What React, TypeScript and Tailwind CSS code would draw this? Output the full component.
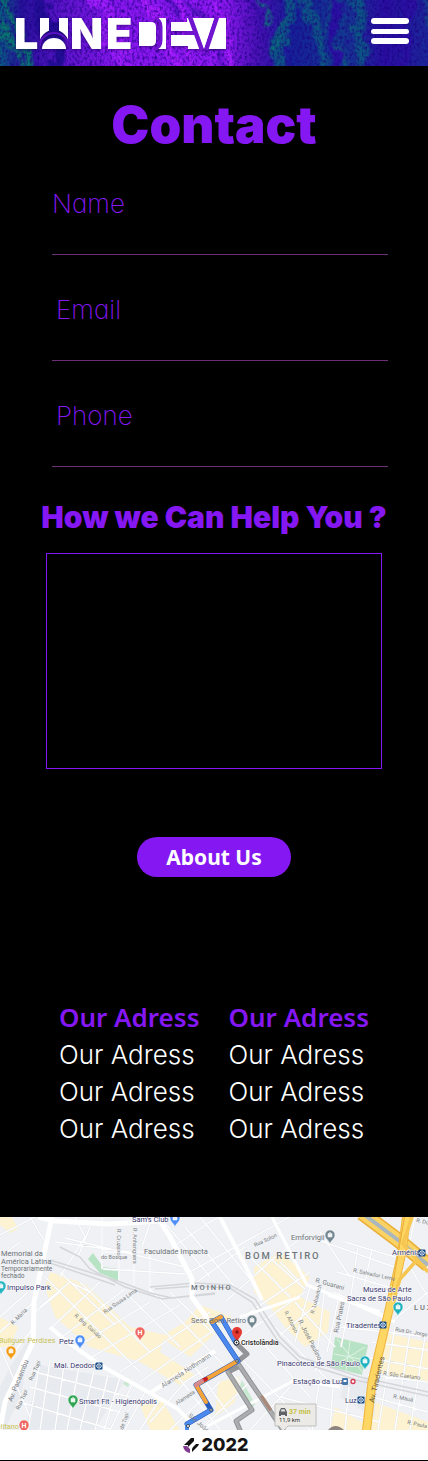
import React from "react";

const sans = "font-['Inter','Open_Sans',sans-serif]";
const thin = "font-['Inter','Lato',sans-serif] [font-feature-settings:'cv11'] text-[26px]";

function HeaderTexture() {
  return (
    <svg
      aria-hidden="true"
      className="absolute inset-0 h-full w-full"
      viewBox="0 0 428 66"
      preserveAspectRatio="none"
    >
      <defs>
        <filter id="marble" x="-10%" y="-30%" width="120%" height="160%" colorInterpolationFilters="sRGB">
          <feTurbulence type="fractalNoise" baseFrequency="0.04 0.03" numOctaves="4" seed="8" result="n" />
          <feDisplacementMap in="SourceGraphic" in2="n" scale="32" xChannelSelector="R" yChannelSelector="G" />
          <feGaussianBlur stdDeviation="1" />
        </filter>
        <filter id="grain" x="0" y="0" width="100%" height="100%" colorInterpolationFilters="sRGB">
          <feTurbulence type="fractalNoise" baseFrequency="0.4 0.3" numOctaves="3" seed="3" />
          <feColorMatrix values="0 0 0 0 0.1  0 0 0 0 0  0 0 0 0 0.5  1.8 0 0 0 -0.75" />
        </filter>
        <linearGradient id="base" x1="0" x2="1" y1="0" y2="0">
          <stop offset="0" stopColor="#075a80" />
          <stop offset="0.05" stopColor="#25119a" />
          <stop offset="0.14" stopColor="#5a14c8" />
          <stop offset="0.28" stopColor="#8716ee" />
          <stop offset="0.52" stopColor="#9018f4" />
          <stop offset="0.6" stopColor="#4a11b6" />
          <stop offset="0.68" stopColor="#161f98" />
          <stop offset="0.8" stopColor="#123a90" />
          <stop offset="0.9" stopColor="#2a0da2" />
          <stop offset="1" stopColor="#1a2898" />
        </linearGradient>
      </defs>
      <rect width="428" height="66" fill="url(#base)" />
      <g filter="url(#marble)" fill="none" strokeLinecap="round">
        <path d="M0 -20 45 100M-12 0 34 90" stroke="#08706f" strokeWidth="8" />
        <path d="M28 -20 52 30 60 100" stroke="#220e96" strokeWidth="14" />
        <path d="M92 -20 112 45 130 90" stroke="#9d1cfc" strokeWidth="14" />
        <path d="M155 -20 185 40 215 100M182 -20 220 70" stroke="#5713c2" strokeWidth="4" />
        <path d="M135 -20 190 90M170 -20 205 90M215 -20 235 90" stroke="#a71dff" strokeWidth="8" />
        <path d="M254 -20 262 20 272 50 268 90" stroke="#3b10ac" strokeWidth="5" />
        <path d="M290 -20 290 15 280 40 282 90M300 -10 315 35 330 90M350 -20 365 90" stroke="#0c5385" strokeWidth="11" />
        <path d="M330 -20 340 30 336 90M405 -20 400 90" stroke="#2b10a4" strokeWidth="9" />
        <path d="M262 -10 270 20M285 10 276 60M335 -20 328 12 322 50M340 40 350 80M424 0 440 60" stroke="#078070" strokeWidth="1.5" />
      </g>
      <rect width="428" height="66" filter="url(#grain)" />
    </svg>
  );
}

function Wordmark() {
  return (
    <svg
      width="212"
      height="34"
      viewBox="15 17 212 34"
      role="img"
      aria-label="LUNEDEV"
      className="overflow-visible drop-shadow-[0_1px_1px_rgba(20,0,60,0.5)]"
    >
      <g fill="#fff" className="font-['Inter',sans-serif] text-[43px] font-black">
        <text x="14" y="49">L</text>
        <text x="70" y="49">N</text>
        <text x="106" y="49">E</text>
      </g>
      <defs>
        <clipPath id="aboveMoon">
          <path d="M39 17H69V45A15 15 0 0 0 39 45Z" />
        </clipPath>
      </defs>
      <g fill="#fff">
        <path d="M40 18h9v31h-9zM59 18h9v31h-9z" clipPath="url(#aboveMoon)" />
        <path d="M42 49a12 11 0 0 1 24 0z" />
        <path d="M139 22h12q5 0 5 5v14q0 5-5 5h-12z" />
        <path d="M155 18h11v31h-11q6-2 6-9V27q0-7-6-9z" />
        <path d="M171 22h19l4 9h-23zM171 35h23v11h-23z" />
        <path d="M187 18h39v31h-38z" />
      </g>
      <path d="M155 18q6 2 6 9v13q0 7-6 9" fill="none" stroke="#7114cf" strokeWidth="3" />
      <path d="M40 46a14 13 0 0 1 28 0" fill="none" stroke="#5a12c0" strokeWidth="2" />
      <path d="M190 17 202 50M217 17 206 50" stroke="#7114cf" strokeWidth="4.5" />
      <path d="M186 31h10l1 4h-11z" fill="#7114cf" />
      <path d="M194 18h20l-10 30z" fill="#fff" />
    </svg>
  );
}

const pins: [number, number, string, string][] = [
  [175, 2, "#4c8df6", ""],
  [1, 70, "#20b2be", ""],
  [330, 19, "#71868f", ""],
  [398, 91, "#20b2be", ""],
  [252, 104, "#71868f", ""],
  [80, 124, "#4c8df6", ""],
  [11, 135, "#f29b13", ""],
  [73, 184, "#30a552", ""],
  [140, 116, "#ee6760", "H"],
  [24, 209, "#ee6760", "H"],
  [365, 145, "#20b2be", ""],
];

const stations: [number, number][] = [
  [422, 36],
  [383, 108],
  [99, 149],
  [361, 183],
];

const smallRoads =
  "M0 18 45 -5M0 40 20 25M48 30 30 0M55 25 130 35M60 60 85 20 75 0M78 40 90 10M102 0V52M119 12V68M134 12V68M150 35V75M103 35H150M103 52 185 57M65 21 185 50M142 30 152 0M173 30 210 5 230 -5M186 57 290 0M190 70 245 30M160 0 210 60M200 0 250 62M185 10 235 70M0 100 28 75M0 115 34 85M10 140 34 110M0 130 30 200M40 90 70 65 90 75M45 60 95 110 140 155M60 55 115 108M80 65 150 135M35 95 60 75M50 112 100 65M62 120 125 72M80 128 150 85M92 140 180 88M120 155 210 95M140 165 230 102M150 72 240 165M130 80 180 130M170 75 215 118M35 155 130 180M30 170 120 195M20 185 110 212M40 145 28 213M50 143 40 213M64 148 55 213M79 150 67 213M94 154 80 213M108 158 95 213M120 160 104 213M132 168 110 213M145 175 125 213M160 182 140 213M178 160 220 213M195 150 240 213M150 205 185 165 208 150M220 165 170 213M255 160 200 213M240 140 310 213M262 125 310 180M275 110 330 165M225 85 275 40 310 15M235 105 310 55M240 120 305 75M265 130 320 85M250 40 290 80M263 35 305 72M280 45 300 65M295 85 335 130M320 15 350 60M310 70 295 125M325 70 315 155M340 75 327 135M310 20 408 55M345 25 402 42M358 30 350 85 341 130M372 32 363 75M337 55 395 72M333 75 390 100M340 110 428 120M372 125 428 133M370 141 428 152M368 158 428 165M365 178 428 195M385 110 428 75M395 110 378 213M410 115 395 213M425 120 410 213M410 50 428 80M415 0 410 25M320 160 312 213M333 170 330 213M349 170 345 213M280 180 380 205M290 170 250 213";

function Map() {
  return (
    <svg
      role="img"
      aria-label="Map to Cristolândia, 37 min by car"
      viewBox="0 0 428 213"
      preserveAspectRatio="xMidYMid slice"
      className="block w-full bg-[#eff1f4] font-['Roboto',sans-serif]"
    >
      <rect width="428" height="213" fill="#eff1f4" />
      <g fill="#fdf3d2">
        <path d="M0 0H12L18 12 10 16 0 8ZM50 55 85 67 130 110 165 118 160 135 195 158 180 168 140 145 90 130 55 100 45 70Z" />
        <path d="M254 50 280 35 310 60 300 80 330 95 328 115 305 130 285 110 270 90 254 75ZM335 190 370 210 365 213H330ZM380 115 428 125V165L376 155ZM0 100 18 110 10 130 0 130ZM200 88 232 100 190 140 160 120 185 105Z" />
        <path d="M140 188 160 180 180 213H150ZM218 165 240 160 235 185 215 200ZM374 185 428 205V213H370Z" />
      </g>
      <g fill="#e7eaef">
        <path d="M40 148 125 163 95 213H25ZM10 150 30 120 22 175 5 213H0V170ZM345 165 378 160 374 200 340 180Z" />
      </g>
      <g fill="#b8e2c4">
        <path d="M88 42 93 36 103 50 118 52V64L100 56Z" />
        <path d="M335 120 368 128 362 158 331 150Z" />
        <path d="m125 164 5 2-2 4-5-3ZM242 163 255 187 250 195 238 175ZM366 106 382 108 380 110 366 109Z" fill="#c9e8d1" />
      </g>
      <path d="M337 122 363 156M365 130 334 149M350 124 346 154M334 137 365 143" fill="none" stroke="#dff2e4" strokeWidth="1" />
      <path d={smallRoads} fill="none" stroke="#dfe2e7" strokeWidth="2" />
      <path d={smallRoads} fill="none" stroke="#fff" strokeWidth="1.4" />
      <g fill="none" stroke="#d4d6da" strokeWidth="1.5">
        <path d="M50 43 118 64 150 76 172 81 215 77M60 30 80 40 90 52 125 70 162 82 215 76M50 46 115 68M150 70 195 66 230 68 255 82 280 120 300 140 360 160 428 175M155 72 195 69 230 71 252 85 277 123 300 145 360 164 428 179" />
      </g>
      <g fill="none" stroke="#fff" strokeWidth="5" strokeLinejoin="round">
        <path d="M52 0 34 85 33 125 5 185 0 213M38 0 55 4 110 7 160 4 170 20 192 62 192 80 215 112" />
        <path d="M50 110 65 123 100 148 150 176 178 192 190 205 188 213M150 176 215 134M220 0 250 58 262 83" strokeWidth="4" />
        <path d="M272 0 307 68 350 85 395 105M240 100 300 80M200 213 295 163 340 170M328 78 380 95" strokeWidth="3" />
      </g>
      <g fill="none" strokeLinejoin="round">
        <path d="M362 -4 398 23 428 48" stroke="#e9ae34" strokeWidth="15" />
        <path d="M362 -4 398 23 428 48" stroke="#fbd365" strokeWidth="12" />
        <path d="M362 -4 398 23 428 48" stroke="#aab7bd" strokeWidth="4" />
        <path d="M407 -4 402 35 392 80 385 110 372 165 366 218" stroke="#efb53e" strokeWidth="9" />
        <path d="M407 -4 402 35 392 80 385 110 372 165 366 218" stroke="#fdd663" strokeWidth="7" />
        <path d="M395 78 400 62 417 43M413 -3 403 27 420 46 428 55" stroke="#f6c650" strokeWidth="3.5" />
        <path d="M405 -3 391 78" stroke="#e8ac35" strokeWidth="1" />
      </g>
      <g fill="none" strokeLinejoin="round" strokeLinecap="round">
        <path d="M237 127 247 137 237 145 283 213M228 155 252 193 236 204 240 213M228 155 238 150" stroke="#929497" strokeWidth="5" />
        <path d="M237 145 283 213M228 155 252 193 236 204 240 213" stroke="#aaacae" strokeWidth="3" />
        <path d="M262 180 270 192" stroke="#a98979" strokeWidth="3.5" />
        <path d="M236 126 221 100 212 105 238 144 196 168 211 193 187 207" stroke="#285dbd" strokeWidth="5" />
        <path d="M236 126 221 100 212 105 238 144M211 193 187 207V213" stroke="#4c89ee" strokeWidth="4" />
        <path d="M221 100 212 105M236 145 196 168 206 185" stroke="#f5a33a" strokeWidth="4" />
        <path d="M204 163 206 162" stroke="#c81d22" strokeWidth="4" />
        <path d="M196 168 202 164" stroke="#d8898c" strokeWidth="4" />
      </g>
      <g fill="#fff" stroke="#345" strokeWidth="1">
        <circle cx="237" cy="144" r="1.3" />
        <circle cx="211" cy="193" r="1.3" />
        <circle cx="188" cy="209" r="1.5" />
      </g>
      <g fill="#777b80" fontSize="5.5">
        <text transform="translate(105 97) rotate(-35)">Rua Sousa Lima</text>
        <text transform="translate(74 99) rotate(42)">R. Brg. Galvão</text>
        <text transform="translate(13 108) rotate(-45)">R. Marta</text>
        <text transform="translate(117 12) rotate(90)">R. Cruzeiro</text>
        <text transform="translate(133 11) rotate(90)">R. Anhanguera</text>
        <text x="101" y="42">do Bosque</text>
        <text transform="translate(255 30) rotate(-25)">Rua Solon</text>
        <text transform="translate(315 65) rotate(16)" fontSize="6.5">R. Guarani</text>
        <text transform="translate(353 55) rotate(12)">R. Salvador Leme</text>
        <text transform="translate(314 97) rotate(-75)">R. Lubavitch</text>
        <text transform="translate(338 116) rotate(-78)" fontSize="6.5">Rua Prates</text>
        <text transform="translate(284 95) rotate(63)">R. Afonso</text>
        <text transform="translate(298 104) rotate(63)" fontSize="6.5">R. José Paulino</text>
        <text transform="translate(12 185) rotate(-68)" fontSize="7">Av. Pacaembu</text>
        <text transform="translate(32 164) rotate(-65)">Rua Tupi</text>
        <text transform="translate(19 193) rotate(-65)">Rua Tupi</text>
        <text transform="translate(163 171) rotate(-33)" fontSize="6.5">Alameda Nothmann</text>
        <text transform="translate(177 188) rotate(-33)">Alameda</text>
        <text transform="translate(188 199) rotate(42)" fontSize="6">São João</text>
        <text transform="translate(123 213) rotate(-70)">de Tupi</text>
        <text transform="translate(374 186) rotate(-77)" fontSize="7.5" fill="#665d44">Av. Tiradentes</text>
        <text transform="translate(383 158) rotate(7)">R. São Caetano</text>
        <text transform="translate(393 181) rotate(11)">R. Mauá</text>
        <text transform="translate(395 114) rotate(10)">Rua Dr. Jorge M</text>
        <text transform="translate(407 207) rotate(12)">R. Paula</text>
        <text transform="translate(416 5) rotate(12)">R. Do</text>
      </g>
      <g fill="#6d7277" fontSize="7.5">
        <text x="1" y="39">Memorial da</text>
        <text x="1" y="47">América Latina</text>
        <text x="1" y="54" fontSize="6.5">Temporariamente</text>
        <text x="1" y="61" fontSize="6.5">fechado</text>
        <text x="144" y="37">Faculdade Impacta</text>
        <text x="291" y="23">Emforvigil</text>
        <text x="191" y="106">Sesc Bom Retiro</text>
      </g>
      <g fill="#70757a" className="font-medium tracking-[2px]">
        <text x="191" y="73" fontSize="7.5">MOINHO</text>
        <text x="245" y="42" fontSize="9.5">BOM RETIRO</text>
        <text x="414" y="93" fontSize="7.5">LUZ</text>
      </g>
      <g fill="#c9c252" fontSize="7.3">
        <text x="-1" y="126">Bullguer Perdizes</text>
        <text x="-3" y="212">elitano</text>
      </g>
      <g fill="#37366f" fontSize="7.5" stroke="#fff" strokeWidth="1" paintOrder="stroke">
        <text x="132" y="5">Sam's Club</text>
        <text x="7" y="73">Impulso Park</text>
        <text x="59" y="127">Petz</text>
        <text x="54" y="151">Mal. Deodoro</text>
        <text x="79" y="187">Smart Fit - Higienópolis</text>
        <text x="392" y="38">Arménia</text>
        <text x="363" y="75">Museu de Arte</text>
        <text x="347" y="84">Sacra de São Paulo</text>
        <text x="346" y="111">Tiradentes</text>
        <text x="277" y="149">Pinacoteca de São Paulo</text>
        <text x="293" y="167">Estação da Luz</text>
        <text x="345" y="186">Luz</text>
        <text x="241" y="128" fontSize="7" fill="#222" className="font-medium">Cristolândia</text>
      </g>
      {pins.map(([x, y, color, letter]) => (
        <g key={`${x}-${y}`} transform={`translate(${x} ${y})`}>
          <path d="M0 8C-1 4-5 3-5-1A5 5 0 0 1 5-1C5 3 1 4 0 8Z" fill={color} stroke="#fff" strokeWidth="0.5" />
          {letter ? (
            <text textAnchor="middle" y="2" fontSize="7" fill="#fff" className="font-bold">{letter}</text>
          ) : (
            <path d="M-2-2.5H2V1H-2ZM-1-3.5H1" fill="#fff" stroke="#fff" strokeWidth="0.6" opacity="0.9" />
          )}
        </g>
      ))}
      {stations.map(([x, y]) => (
        <g key={`${x}-${y}`} transform={`translate(${x} ${y})`}>
          <rect x="-3.5" y="-3.5" width="7" height="7" rx="1" fill="#1b4f8c" />
          <path d="M0-3V3M-1-2-2.5 0-1 2M1-2 2.5 0 1 2" fill="none" stroke="#fff" strokeWidth="0.9" />
        </g>
      ))}
      <rect x="342" y="161" width="6" height="7" rx="1" fill="#4777a8" />
      <path d="M343.5 163h3v2h-3z" fill="#fff" />
      <circle cx="353" cy="164.5" r="2" fill="#fff" stroke="#d5354d" strokeWidth="1.3" />
      <path d="M237 126C236 121 232 119 232 115A5 5 0 0 1 242 115C242 119 238 121 237 126Z" fill="#e43a32" />
      <circle cx="237" cy="115" r="1.7" fill="#8e1310" />
      <circle cx="236.5" cy="125.5" r="2.5" fill="#fff" stroke="#222" />
      <circle cx="236.5" cy="125.5" r="0.9" fill="#222" />
      <path d="M275 187H316V209H288L283 214 279 209H275Z" fill="#eceae6" stroke="#bfbfbb" />
      <path d="M279 195 281 191H285L287 195V199H285V198H281V199H279Z" fill="#5f6368" />
      <path d="M281.5 192.2H284.5L285.3 194.5H280.7Z" fill="#dfe0de" />
      <text x="289" y="197" fontSize="7" fill="#c5bf3f" className="font-bold">37 min</text>
      <text x="279" y="205" fontSize="6" fill="#333">11,9 km</text>
      <path d="M328 213Q335 205 344 213Z" fill="#8f8580" />
    </svg>
  );
}

const fields = [
  { id: "name", label: "Name", type: "text", inset: "" },
  { id: "email", label: "Email", type: "email", inset: "pl-1" },
  { id: "phone", label: "Phone", type: "tel", inset: "pl-1" },
];

function AddressColumn() {
  return (
    <section>
      <h3 className="font-['Noto_Sans','Open_Sans',sans-serif] text-[26px] leading-[37px] font-semibold text-[#8417f2]">Our Adress</h3>
      <ul className={`${thin} leading-[37px] font-light text-white`}>
        <li>Our Adress</li>
        <li>Our Adress</li>
        <li>Our Adress</li>
      </ul>
    </section>
  );
}

export default function App() {
  return (
    <div className={`${sans} bg-black`}>
      <header className="relative h-[66px] overflow-hidden bg-[#5a14c8]">
        <HeaderTexture />
        <div className="relative flex items-start justify-between pt-[17px] pr-[19px] pl-[15px]">
          <a href="#home" aria-label="LUNEDEV">
            <Wordmark />
          </a>
          <button type="button" aria-label="Open menu" className="pt-px">
            <svg width="38" height="26" viewBox="0 0 38 26" fill="#fff">
              <rect width="38" height="6" rx="3" />
              <rect y="11" width="38" height="5" rx="2.5" />
              <rect y="20" width="38" height="6" rx="3" />
            </svg>
          </button>
        </div>
      </header>

      <main>
        <h1 className="mt-[29px] text-center text-[51px] leading-[60px] font-black text-[#8417f2]">Contact</h1>
        <form onSubmit={(e) => e.preventDefault()}>
          <div className="mt-[31px] mr-10 ml-[52px] flex flex-col gap-[37px]">
            {fields.map((f) => (
              <div key={f.id}>
                <label htmlFor={f.id} className={`${thin} ${f.inset} block leading-9 font-extralight text-[#8417f2]`}>
                  {f.label}
                </label>
                <input
                  id={f.id}
                  type={f.type}
                  className="block h-[33px] w-full border-b border-[#6a2f76] bg-transparent text-base text-white outline-none"
                />
              </div>
            ))}
          </div>
          <label htmlFor="message" className="mt-[30px] block text-center text-[30px] leading-10 font-black text-[#8417f2]">
            How we Can Help You ?
          </label>
          <div className="mt-4 px-[46px]">
            <textarea
              id="message"
              className="block h-[216px] w-full resize-none border border-[#8417f2] bg-black p-3 text-white outline-none"
            />
          </div>
          <div className="mt-[68px] flex justify-center">
            <button
              type="button"
              className="h-10 w-[154px] rounded-full bg-[#8417f2] font-['Noto_Sans','Open_Sans',sans-serif] text-[21px] leading-10 font-bold text-white"
            >
              About Us
            </button>
          </div>
        </form>
        <div className="mt-[122px] flex justify-between px-[59px]">
          <AddressColumn />
          <AddressColumn />
        </div>
        <div className="mt-[70px]">
          <Map />
        </div>
      </main>

      <footer className="flex h-[31px] items-center justify-center gap-[3px] border-b border-black bg-white pl-[3px]">
        <svg aria-hidden="true" width="16" height="16" viewBox="0 0 16 16">
          <path d="M1 8 8 1H11V4L5 10V8ZM10 10 13 7H16L15 9 9 15V12Z" fill="#111" />
          <path d="M0 9H4L7 12V16Q1 15 0 9Z" fill="#823b91" />
        </svg>
        <span className="text-lg leading-[30px] font-extrabold text-[#151515]">2022</span>
      </footer>
    </div>
  );
}
